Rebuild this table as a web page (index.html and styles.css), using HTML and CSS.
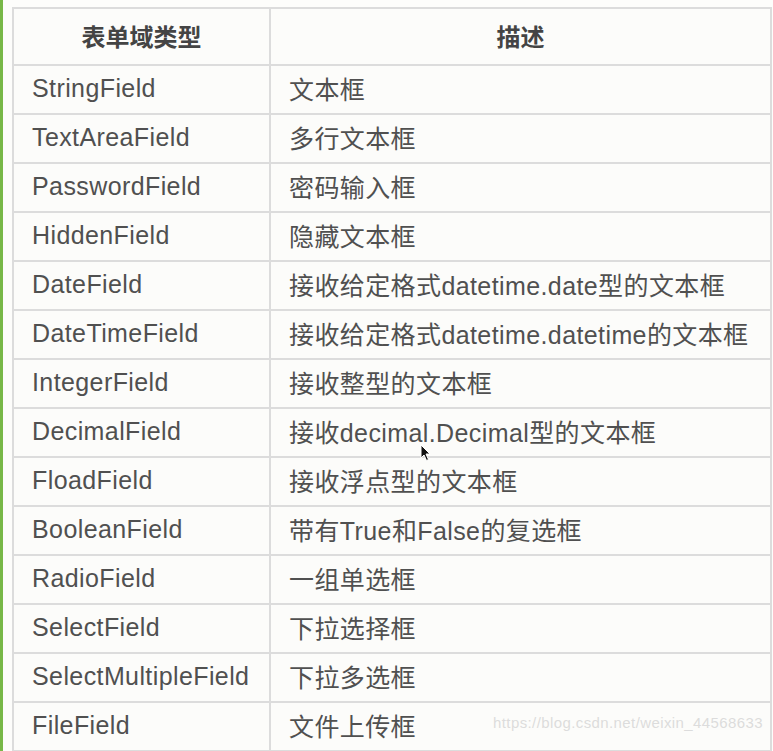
FILE: index.html
```html
<!DOCTYPE html>
<html lang="zh">
<head>
<meta charset="utf-8">
<title>表单域类型</title>
<link rel="stylesheet" href="styles.css">
</head>
<body>
<div class="page">
  <div class="accent"></div>
  <table class="fields">
    <thead>
      <tr><th class="c1">表单域类型</th><th class="c2">描述</th></tr>
    </thead>
    <tbody>
      <tr><td>StringField</td><td>文本框</td></tr>
      <tr><td>TextAreaField</td><td>多行文本框</td></tr>
      <tr><td>PasswordField</td><td>密码输入框</td></tr>
      <tr><td>HiddenField</td><td>隐藏文本框</td></tr>
      <tr><td>DateField</td><td>接收给定格式datetime.date型的文本框</td></tr>
      <tr><td>DateTimeField</td><td>接收给定格式datetime.datetime的文本框</td></tr>
      <tr><td>IntegerField</td><td>接收整型的文本框</td></tr>
      <tr><td>DecimalField</td><td>接收decimal.Decimal型的文本框</td></tr>
      <tr><td>FloadField</td><td>接收浮点型的文本框</td></tr>
      <tr><td>BooleanField</td><td>带有True和False的复选框</td></tr>
      <tr><td>RadioField</td><td>一组单选框</td></tr>
      <tr><td>SelectField</td><td>下拉选择框</td></tr>
      <tr><td>SelectMultipleField</td><td>下拉多选框</td></tr>
      <tr><td>FileField</td><td>文件上传框</td></tr>
    </tbody>
  </table>
  <div class="watermark">https://blog.csdn.net/weixin_44568633</div>
  <svg class="cursor" width="12" height="18" viewBox="0 0 12 18"><path d="M1 1 L1 14 L4 11 L6.5 16.5 L8.5 15.5 L6 10 L10 10 Z" fill="#111" stroke="#fff" stroke-width="1"/></svg>
</div>
</body>
</html>
```
FILE: styles.css
```css
html, body {
  margin: 0;
  padding: 0;
  background: #fdfdfb;
}
.page {
  position: relative;
  display: flex;
  align-items: flex-start;
  width: 773px;
  height: 751px;
  overflow: hidden;
}
.accent {
  width: 3px;
  height: 751px;
  background: #78b848;
  flex: none;
}
.fields {
  margin-left: 9px;
  margin-top: 7px;
  width: 760px;
  border-collapse: collapse;
  table-layout: fixed;
  font-family: "Liberation Sans", "Noto Sans CJK SC", sans-serif;
  font-size: 25px;
  color: #505050;
  background: #fcfcfa;
}
.fields th, .fields td {
  border: 2px solid #dcdcdc;
  text-align: left;
  padding: 0 0 3px 18px;
  white-space: nowrap;
}
.fields th {
  height: 52px;
  text-align: center;
  padding: 0 0 3px 0;
  font-weight: bold;
  color: #444;
  font-size: 24px;
}
.fields .c1 { width: 255px; }
.fields td {
  height: 44px;
  letter-spacing: 0.4px;
}
.watermark {
  position: absolute;
  right: 10px;
  top: 714px;
  font-family: "Liberation Sans", sans-serif;
  font-size: 15px;
  letter-spacing: 0.4px;
  color: #dcdcdc;
}
.cursor {
  position: absolute;
  left: 420px;
  top: 444px;
}
```
